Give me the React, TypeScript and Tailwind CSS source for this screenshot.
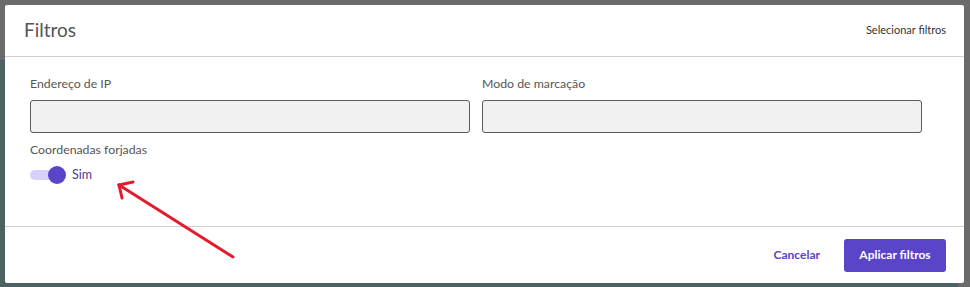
import React, { useState } from 'react';

const FiltrosModal: React.FC = () => {
  const [coordForjadas, setCoordForjadas] = useState(true);

  return (
    <div className="relative h-[287px] w-[970px] overflow-hidden bg-[#4d6363] font-['Lato',sans-serif]">
      {/* Fundo (página escurecida) */}
      <div className="absolute left-0 top-0 h-[60px] w-full bg-[#6b6b6b]" />
      <div className="absolute right-0 top-0 h-full w-[12px] bg-[#6b6b6b]" />

      {/* Modal */}
      <div className="relative ml-[5px] mt-[5px] flex h-[278px] w-[959px] flex-col rounded-[2px] bg-white">
        {/* Cabeçalho */}
        <div className="flex h-[52px] items-center justify-between border-b border-[#cfcfcf] pl-[19px] pr-[18px]">
          <h2 className="text-[19px] text-[#555]">Filtros</h2>
          <span className="text-[11px] text-[#333]">Selecionar filtros</span>
        </div>

        {/* Corpo */}
        <div className="flex h-[170px] flex-col border-b border-[#cfcfcf] pl-[25px] pt-[18px]">
          <div className="flex gap-[12px]">
            <div className="flex w-[440px] flex-col">
              <label className="mb-[7px] text-[12.3px] leading-[18px] text-[#555]">Endereço de IP</label>
              <input className="h-[33px] rounded-[3px] border border-[#5c5c5c] bg-[#f1f1f1] px-2 text-[13px] outline-none" />
            </div>
            <div className="flex w-[440px] flex-col">
              <label className="mb-[7px] text-[12.3px] leading-[18px] text-[#555]">Modo de marcação</label>
              <input className="h-[33px] rounded-[3px] border border-[#5c5c5c] bg-[#f1f1f1] px-2 text-[13px] outline-none" />
            </div>
          </div>

          <label className="mt-[8px] text-[12.3px] leading-[18px] text-[#555]">Coordenadas forjadas</label>
          <button
            type="button"
            onClick={() => setCoordForjadas(!coordForjadas)}
            className="mt-[7px] flex items-center gap-[6px] self-start"
          >
            <span className="relative flex h-[18px] w-[36px] items-center">
              <span className="h-[10px] w-[31px] rounded-full bg-[#d7cffc]" />
              <span className="absolute left-[18px] top-0 h-[18px] w-[18px] rounded-full bg-[#5a44c8]" />
            </span>
            <span className="text-[12.5px] text-[#4a3c8e]">{coordForjadas ? 'Sim' : 'Não'}</span>
          </button>
        </div>

        {/* Rodapé */}
        <div className="flex flex-1 items-center justify-end gap-[24px] pr-[18px]">
          <button type="button" className="text-[12px] font-bold text-[#5a44c8]">
            Cancelar
          </button>
          <button
            type="button"
            className="h-[33px] w-[102px] rounded-[3px] bg-[#5a44c8] text-[12px] font-bold text-white"
          >
            Aplicar filtros
          </button>
        </div>
      </div>

      {/* Seta vermelha de anotação */}
      <svg className="pointer-events-none absolute left-0 top-0" width="970" height="287">
        <g stroke="#e41b2d" strokeWidth="3" strokeLinecap="round" fill="none">
          <line x1="233" y1="257" x2="119" y2="185" />
          <line x1="119" y1="185" x2="133" y2="182" />
          <line x1="119" y1="185" x2="122" y2="198" />
        </g>
      </svg>
    </div>
  );
};

export default function App() {
  return <FiltrosModal />;
}
